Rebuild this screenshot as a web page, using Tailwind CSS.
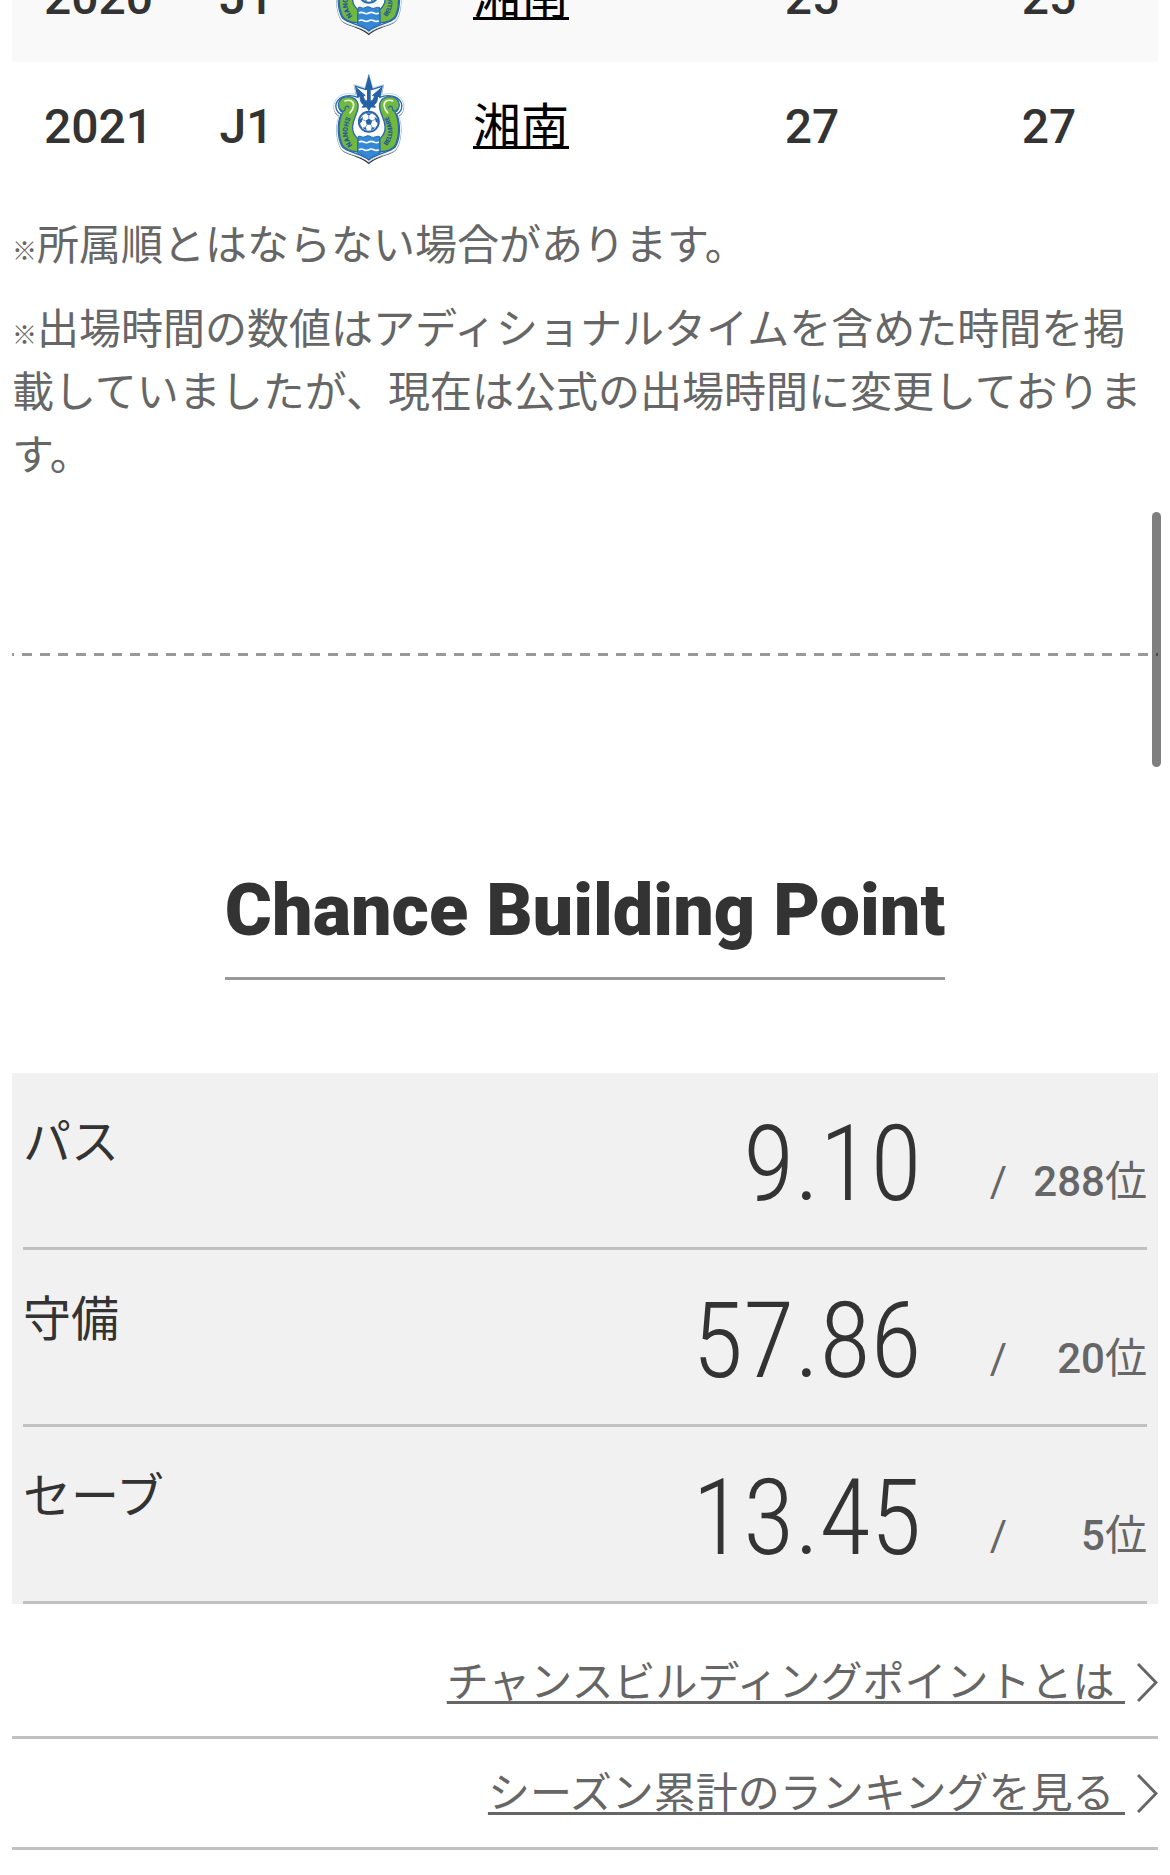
<!DOCTYPE html>
<html lang="ja">
<head>
<meta charset="utf-8">
<meta name="viewport" content="width=device-width, initial-scale=1">
<title>Chance Building Point</title>
<script src="https://cdn.jsdelivr.net/npm/@tailwindcss/browser@4"></script>
</head>
<body class="relative overflow-x-hidden bg-white font-[Roboto,'Noto_Sans_CJK_JP',sans-serif] text-[#333]">

<svg class="hidden" aria-hidden="true">
  <symbol id="crest" viewBox="70 215 220 280">
    <path d="M178 221 L190 262 L223 253 L217 284 C240 275 270 280 281 305 C288 322 282 340 268 347 C280 375 278 420 262 446 C250 464 205 466 178 491 C151 466 106 464 94 446 C78 420 76 375 88 347 C74 340 68 322 75 305 C86 280 116 275 139 284 L133 253 L166 262 Z" fill="#333" transform="translate(0 2)"/>
    <path d="M178 221 L190 262 L223 253 L217 284 C240 275 270 280 281 305 C288 322 282 340 268 347 C280 375 278 420 262 446 C250 464 205 464 178 487 C151 464 106 464 94 446 C78 420 76 375 88 347 C74 340 68 322 75 305 C86 280 116 275 139 284 L133 253 L166 262 Z" fill="#fff" stroke="#a9c3e0" stroke-width="2"/>
    <path d="M178 229 L188 267 L218 258 L211 291 C236 281 266 286 276 308 C281 322 275 336 262 342 C274 372 273 414 258 440 C242 458 200 460 178 480 C156 460 114 458 98 440 C83 414 82 372 94 342 C81 336 75 322 80 308 C90 286 120 281 145 291 L138 258 L168 267 Z" fill="#fff" stroke="#2868ad" stroke-width="4"/>
    <g fill="#72b83f" stroke="#2868ad" stroke-width="4">
      <path d="M90 328 C80 308 92 290 115 289 C138 290 149 306 145 326 C141 346 130 358 129 380 C128 397 137 409 145 416 L145 456 C125 454 106 448 99 437 C86 410 84 366 99 336 C95 335 92 332 90 328 Z"/>
      <path d="M266 328 C276 308 264 290 241 289 C218 290 207 306 211 326 C215 346 226 358 227 380 C228 397 219 409 211 416 L211 456 C231 454 250 448 257 437 C270 410 272 366 257 336 C261 335 264 332 266 328 Z"/>
    </g>
    <g fill="none" stroke-linecap="round">
      <path d="M106 302 C122 296 133 304 132 317 C131 326 126 333 121 338" stroke="#e9f6dc" stroke-width="5"/>
      <path d="M250 302 C234 296 223 304 224 317 C225 326 230 333 235 338" stroke="#e9f6dc" stroke-width="5"/>
      <path d="M92 327 C96 336 107 334 107 324 C107 316 117 315 118 323" stroke="#2868ad" stroke-width="4"/>
      <path d="M264 327 C260 336 249 334 249 324 C249 316 239 315 238 323" stroke="#2868ad" stroke-width="4"/>
    </g>
    <path d="M178 233 L188 268 L182 267 L182 303 C192 301 194 294 195 284 L189 286 L215 263 L210 290 L204 287 C205 303 200 309 193 315 L198 321 L184 320 L178 331 L172 320 L158 321 L163 315 C156 309 151 303 152 287 L146 290 L141 263 L167 286 L161 284 C162 294 164 301 174 303 L174 267 L168 268 Z" fill="#2461a5" stroke="#2461a5" stroke-width="3"/>
    <circle cx="178" cy="365" r="33" fill="#2868ad"/>
    <circle cx="178" cy="365" r="27" fill="#fff"/>
    <g fill="#2461a5">
      <path d="M178 355 L188 362 L184 374 L172 374 L168 362 Z"/>
      <path d="M168 339 L188 339 L178 346 Z"/>
      <path d="M151 358 L161 350 L157 364 L151 370 Z"/>
      <path d="M205 358 L195 350 L199 364 L205 370 Z"/>
      <path d="M158 383 L169 381 L172 391 Z"/>
      <path d="M198 383 L187 381 L184 391 Z"/>
    </g>
    <path d="M178 355V345M188 362L197 358M184 374L189 383M172 374L167 383M168 362L159 358" stroke="#2461a5" stroke-width="2"/>
    <path d="M146 409 C154 405 158 415 166 410 S180 407 186 411 S202 406 210 409 L212 459 C198 463 188 470 178 478 C168 470 158 463 144 459 Z" fill="#3488d6" stroke="#2868ad" stroke-width="3"/>
    <g fill="none" stroke="#fff" stroke-width="5">
      <path d="M148 426 q7 -4 15 0 t15 0 t15 0 t15 0"/>
      <path d="M148 449 q7 -4 15 0 t15 0 t15 0 t15 0"/>
    </g>
    <path id="arcLeft" d="M131 438 C107 412 109 375 134 338" fill="none"/>
    <path id="arcRight" d="M232 438 C255 412 254 375 231 340" fill="none"/>
    <g fill="#24599a" font-family="Roboto, sans-serif" font-weight="900" font-size="21">
      <text><textPath href="#arcLeft" startOffset="3">NANOHS</textPath></text>
      <text font-size="19"><textPath href="#arcRight" startOffset="0">BELLMARE</textPath></text>
    </g>
  </symbol>
</svg>

<main class="px-3">
  <table class="-mt-[67px] w-full table-fixed border-collapse text-[48px] leading-[56px] font-medium">
    <colgroup>
      <col class="w-[173px]"><col class="w-[119px]"><col class="w-[130px]"><col class="w-[250px]"><col class="w-[256px]"><col>
    </colgroup>
    <tbody>
      <tr class="h-[129px] bg-[#f9f9f9] text-center">
        <td>2020</td>
        <td class="pl-1">J1</td>
        <td class="pt-[10px] align-top"><svg class="mx-auto h-[93px] w-[73px]" role="img" aria-label="湘南"><use href="#crest"/></svg></td>
        <td class="pl-[39px] text-left"><a href="#shonan" class="font-normal text-black underline decoration-[3px] underline-offset-[3px]">湘南</a></td>
        <td>25</td>
        <td>25</td>
      </tr>
      <tr class="h-[129px] text-center">
        <td>2021</td>
        <td class="pl-1">J1</td>
        <td class="pt-[10px] align-top"><svg class="mx-auto h-[93px] w-[73px]" role="img" aria-label="湘南"><use href="#crest"/></svg></td>
        <td class="pl-[39px] text-left"><a href="#shonan" class="font-normal text-black underline decoration-[3px] underline-offset-[3px]">湘南</a></td>
        <td>27</td>
        <td>27</td>
      </tr>
    </tbody>
  </table>

  <div class="mt-[23px] space-y-[21px] text-[42px] leading-[63px] text-[#666]">
    <p><span class="font-['Noto_Sans_CJK_JP'] text-[25px] leading-none font-black">※</span>所属順とはならない場合があります。</p>
    <p><span class="font-['Noto_Sans_CJK_JP'] text-[25px] leading-none font-black">※</span>出場時間の数値はアディショナルタイムを含めた時間を掲載していましたが、現在は公式の出場時間に変更しております。</p>
  </div>

  <hr class="mt-[166px] h-[3px] border-0 bg-[repeating-linear-gradient(270deg,#999_0_2px,transparent_2px_10px,#999_10px_18px)]">

  <section>
    <h2 class="mx-auto mt-[207px] w-fit border-b-3 border-[#999] pb-[18px] text-[72px] leading-[96px] font-black">Chance Building Point</h2>

    <dl class="mt-[93px] bg-[#f1f1f1] px-[11px]">
      <div class="flex h-[177px] justify-between border-b-3 border-[#c1c1c1]">
        <dt class="pt-[34px] text-[48px] leading-[72px]">パス</dt>
        <dd class="flex items-end text-[42px] leading-[63px] text-[#666]">
          <span class="font-['Roboto_Condensed',Roboto] text-[105px] leading-[165px] font-light text-[#333]">9.10</span>
          <span class="ml-[68px] pb-[34px]">/</span>
          <span class="w-[140px] pb-[34px] text-right font-medium">288<span class="font-normal">位</span></span>
        </dd>
      </div>
      <div class="flex h-[177px] justify-between border-b-3 border-[#c1c1c1]">
        <dt class="pt-[34px] text-[48px] leading-[72px]">守備</dt>
        <dd class="flex items-end text-[42px] leading-[63px] text-[#666]">
          <span class="font-['Roboto_Condensed',Roboto] text-[105px] leading-[165px] font-light text-[#333]">57.86</span>
          <span class="ml-[68px] pb-[34px]">/</span>
          <span class="w-[140px] pb-[34px] text-right font-medium">20<span class="font-normal">位</span></span>
        </dd>
      </div>
      <div class="flex h-[177px] justify-between border-b-3 border-[#c1c1c1]">
        <dt class="pt-[34px] text-[48px] leading-[72px]">セーブ</dt>
        <dd class="flex items-end text-[42px] leading-[63px] text-[#666]">
          <span class="font-['Roboto_Condensed',Roboto] text-[105px] leading-[165px] font-light text-[#333]">13.45</span>
          <span class="ml-[68px] pb-[34px]">/</span>
          <span class="w-[140px] pb-[34px] text-right font-medium">5<span class="font-normal">位</span></span>
        </dd>
      </div>
    </dl>

    <ul class="mt-6 text-[42px] leading-[63px] text-[#666]">
      <li class="flex h-[111px] items-center justify-end gap-3 border-b-3 border-[#c1c1c1]">
        <a href="#about" class="underline decoration-[3px] underline-offset-[4px]">チャンスビルディングポイントとは&nbsp;</a>
        <svg class="h-[39px] w-[21px]" viewBox="0 0 21 39" fill="none" stroke="#666" stroke-width="3" aria-hidden="true"><path d="M1 1 L19 19.500 L1 38"/></svg>
      </li>
      <li class="flex h-[111px] items-center justify-end gap-3 border-b-3 border-[#c1c1c1]">
        <a href="#ranking" class="underline decoration-[3px] underline-offset-[4px]">シーズン累計のランキングを見る&nbsp;</a>
        <svg class="h-[39px] w-[21px]" viewBox="0 0 21 39" fill="none" stroke="#666" stroke-width="3" aria-hidden="true"><path d="M1 1 L19 19.500 L1 38"/></svg>
      </li>
    </ul>
  </section>
</main>

<div class="absolute top-[512px] right-[9px] h-[255px] w-[9px] rounded-full bg-black/50" aria-hidden="true"></div>
</body>
</html>
